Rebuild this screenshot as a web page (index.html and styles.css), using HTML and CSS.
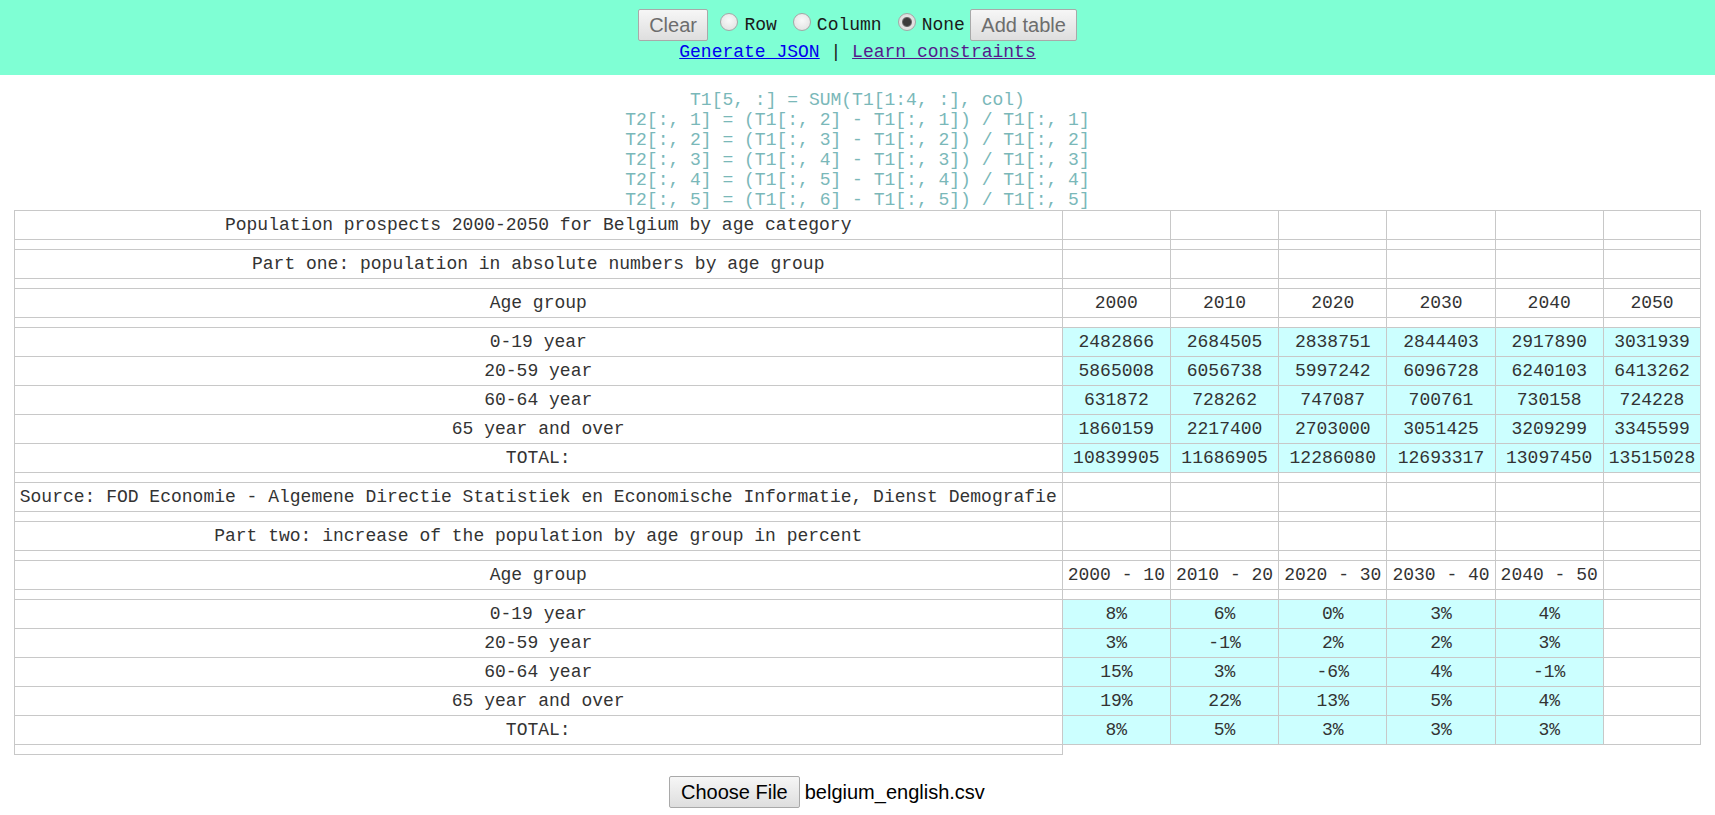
FILE: index.html
```html
<!DOCTYPE html>
<html lang="en">
<head>
<meta charset="utf-8">
<title>Table constraints</title>
<link rel="stylesheet" href="styles.css">
</head>
<body>
<header class="topbar">
  <div class="controls">
    <button class="btn btn-muted" type="button">Clear</button>
    <label class="opt opt-first"><input type="radio" name="mode" class="radio"><span class="opt-text">Row</span></label>
    <label class="opt"><input type="radio" name="mode" class="radio"><span class="opt-text">Column</span></label>
    <label class="opt"><input type="radio" name="mode" class="radio" checked><span class="opt-text">None</span></label>
    <button class="btn btn-muted btn-add" type="button">Add table</button>
  </div>
  <div class="links"><a href="#" class="link">Generate JSON</a> | <a href="#" class="link link-visited">Learn constraints</a></div>
</header>

<div class="constraints">
  <div class="cline">T1[5, :] = SUM(T1[1:4, :], col)</div>
  <div class="cline">T2[:, 1] = (T1[:, 2] - T1[:, 1]) / T1[:, 1]</div>
  <div class="cline">T2[:, 2] = (T1[:, 3] - T1[:, 2]) / T1[:, 2]</div>
  <div class="cline">T2[:, 3] = (T1[:, 4] - T1[:, 3]) / T1[:, 3]</div>
  <div class="cline">T2[:, 4] = (T1[:, 5] - T1[:, 4]) / T1[:, 4]</div>
  <div class="cline">T2[:, 5] = (T1[:, 6] - T1[:, 5]) / T1[:, 5]</div>
</div>

<table class="grid">
  <tbody>
    <tr><td>Population prospects 2000-2050 for Belgium by age category</td><td></td><td></td><td></td><td></td><td></td><td></td></tr>
    <tr class="gap"><td></td><td></td><td></td><td></td><td></td><td></td><td></td></tr>
    <tr><td>Part one: population in absolute numbers by age group</td><td></td><td></td><td></td><td></td><td></td><td></td></tr>
    <tr class="gap"><td></td><td></td><td></td><td></td><td></td><td></td><td></td></tr>
    <tr><td>Age group</td><td>2000</td><td>2010</td><td>2020</td><td>2030</td><td>2040</td><td>2050</td></tr>
    <tr class="gap"><td></td><td></td><td></td><td></td><td></td><td></td><td></td></tr>
    <tr><td>0-19 year</td><td class="v">2482866</td><td class="v">2684505</td><td class="v">2838751</td><td class="v">2844403</td><td class="v">2917890</td><td class="v">3031939</td></tr>
    <tr><td>20-59 year</td><td class="v">5865008</td><td class="v">6056738</td><td class="v">5997242</td><td class="v">6096728</td><td class="v">6240103</td><td class="v">6413262</td></tr>
    <tr><td>60-64 year</td><td class="v">631872</td><td class="v">728262</td><td class="v">747087</td><td class="v">700761</td><td class="v">730158</td><td class="v">724228</td></tr>
    <tr><td>65 year and over</td><td class="v">1860159</td><td class="v">2217400</td><td class="v">2703000</td><td class="v">3051425</td><td class="v">3209299</td><td class="v">3345599</td></tr>
    <tr><td>TOTAL:</td><td class="v">10839905</td><td class="v">11686905</td><td class="v">12286080</td><td class="v">12693317</td><td class="v">13097450</td><td class="v">13515028</td></tr>
    <tr class="gap"><td></td><td></td><td></td><td></td><td></td><td></td><td></td></tr>
    <tr><td>Source: FOD Economie - Algemene Directie Statistiek en Economische Informatie, Dienst Demografie</td><td></td><td></td><td></td><td></td><td></td><td></td></tr>
    <tr class="gap"><td></td><td></td><td></td><td></td><td></td><td></td><td></td></tr>
    <tr><td>Part two: increase of the population by age group in percent</td><td></td><td></td><td></td><td></td><td></td><td></td></tr>
    <tr class="gap"><td></td><td></td><td></td><td></td><td></td><td></td><td></td></tr>
    <tr><td>Age group</td><td>2000 - 10</td><td>2010 - 20</td><td>2020 - 30</td><td>2030 - 40</td><td>2040 - 50</td><td></td></tr>
    <tr class="gap"><td></td><td></td><td></td><td></td><td></td><td></td><td></td></tr>
    <tr><td>0-19 year</td><td class="v">8%</td><td class="v">6%</td><td class="v">0%</td><td class="v">3%</td><td class="v">4%</td><td></td></tr>
    <tr><td>20-59 year</td><td class="v">3%</td><td class="v">-1%</td><td class="v">2%</td><td class="v">2%</td><td class="v">3%</td><td></td></tr>
    <tr><td>60-64 year</td><td class="v">15%</td><td class="v">3%</td><td class="v">-6%</td><td class="v">4%</td><td class="v">-1%</td><td></td></tr>
    <tr><td>65 year and over</td><td class="v">19%</td><td class="v">22%</td><td class="v">13%</td><td class="v">5%</td><td class="v">4%</td><td></td></tr>
    <tr><td>TOTAL:</td><td class="v">8%</td><td class="v">5%</td><td class="v">3%</td><td class="v">3%</td><td class="v">3%</td><td></td></tr>
    <tr class="gap"><td></td></tr>
  </tbody>
</table>

<div class="file">
  <span class="btn file-btn">Choose File</span><span class="file-name">belgium_english.csv</span>
</div>
</body>
</html>
```
FILE: styles.css
```css
html, body {
  margin: 0;
  padding: 0;
  background: #ffffff;
}

body {
  font-family: "Liberation Mono", "Courier New", monospace;
  font-size: 18px;
  line-height: 20px;
  color: #000;
}

.topbar {
  background: #7fffd4;
  padding: 9px 0 13px;
}

.controls {
  display: flex;
  justify-content: center;
  align-items: flex-start;
  height: 32px;
}

.btn {
  box-sizing: border-box;
  height: 32px;
  padding: 0 10.5px;
  border: 1px solid #a9a9a9;
  border-radius: 2px;
  background: linear-gradient(#f6f6f6, #dedede);
  font-family: "Liberation Sans", Arial, sans-serif;
  font-size: 20px;
  line-height: 30px;
  color: #000;
  display: inline-block;
}

.btn-muted {
  color: #6d6d6d;
}

.btn-add {
  margin-left: 5px;
}

.opt {
  display: flex;
  align-items: flex-start;
  height: 32px;
  margin-left: 16px;
}

.opt-first {
  margin-left: 12px;
}

.radio {
  -webkit-appearance: none;
  appearance: none;
  box-sizing: border-box;
  width: 18px;
  height: 18px;
  margin: 4px 6px 0 0;
  border: 1px solid #a6a6a6;
  border-radius: 50%;
  background: radial-gradient(circle at 50% 40%, #f9f9f9 0%, #e6e6e6 70%, #d6d6d6 100%);
}

.radio:checked {
  background: radial-gradient(circle at 50% 50%, #3c3c3c 0, #3c3c3c 3.5px, #6a6a6a 4.5px, #e2e2e2 5.5px, #dadada 100%);
}

.opt-text {
  margin-top: 6px;
  line-height: 20px;
  color: #1a1a1a;
}

.links {
  text-align: center;
  margin-top: 1px;
  color: #1a1a1a;
}

.link {
  color: #0000ee;
}

.link-visited {
  color: #551a8b;
}

.constraints {
  margin-top: 15px;
  text-align: center;
  color: #7ab8b9;
}

.cline {
  white-space: pre;
  height: 20px;
}

.grid {
  border-collapse: collapse;
  margin: 0 auto;
  color: #333;
}

.grid td {
  border: 1px solid #c8c8c8;
  padding: 4px 5px;
  text-align: center;
  white-space: nowrap;
}

.grid tr.gap td {
  padding: 5px 5px 4px;
}

.grid td.v {
  background: #ccffff;
}

.file {
  width: 377px;
  margin: 21px auto 0;
  display: flex;
  align-items: center;
}

.file-btn {
  padding: 0 11px;
}

.file-name {
  margin-left: 5px;
  font-family: "Liberation Sans", Arial, sans-serif;
  font-size: 20px;
  color: #000;
}
```
